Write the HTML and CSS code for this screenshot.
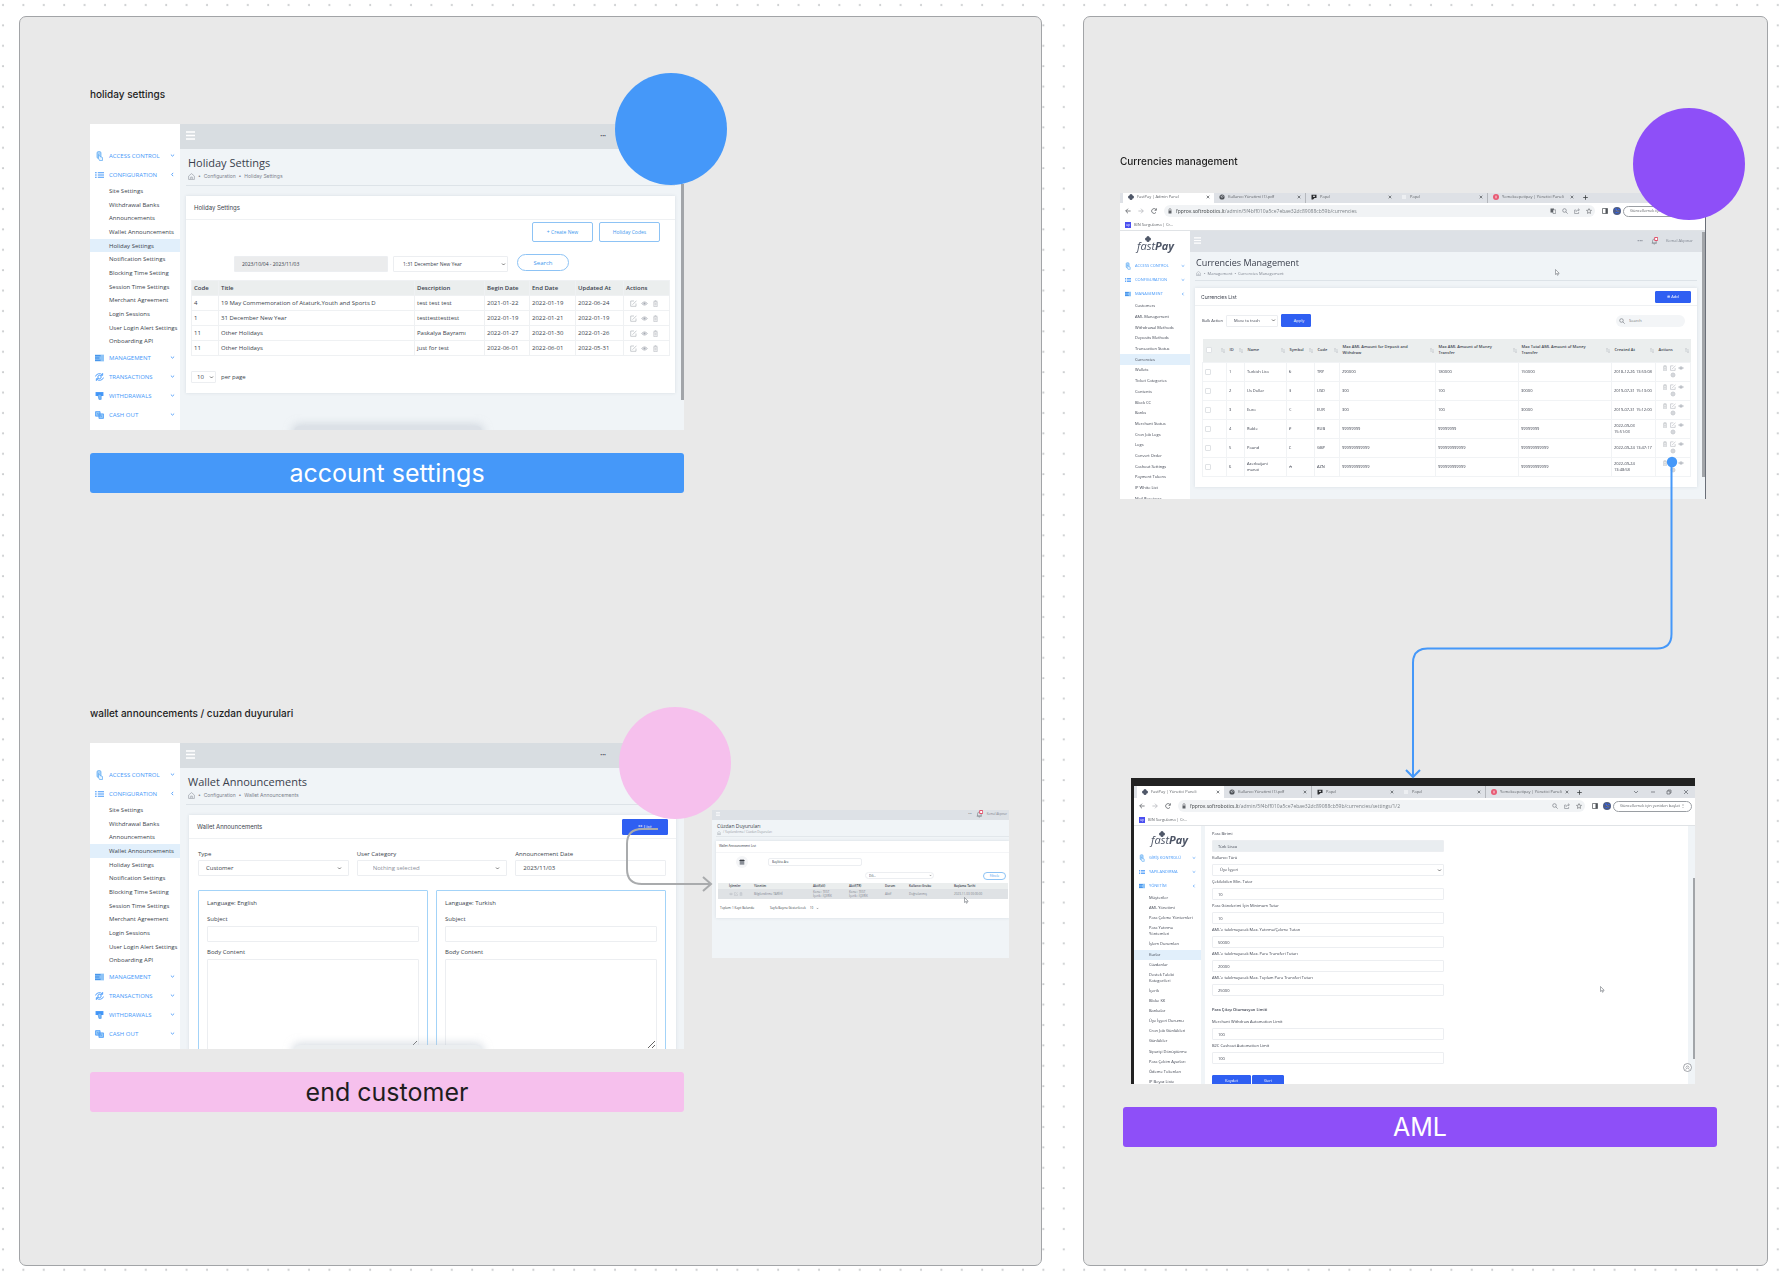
FILE: index.html
```html
<!DOCTYPE html>
<html lang="en">
<head>
    <meta charset="UTF-8">
    <meta name="viewport" content="width=device-width, initial-scale=1.0">
    <title>FastPay board</title>
    <link rel="stylesheet" href="styles.css">
</head>
<body>
    <!-- Icons -->
    <svg class="sprite" aria-hidden="true">
        <symbol id="i-menu" viewBox="0 0 9 9"><path d="M0 1h9M0 4.500h9M0 8h9" stroke="#fff" stroke-width="1.600"/></symbol>
        <symbol id="i-access" viewBox="0 0 8 10"><rect x="1.500" y=".500" width="4" height="7" rx="1.500" fill="#a9d3fa" stroke="#5ba9f2" stroke-width=".700"/><path d="M3 3.500v4l1 2h3v-3l-2.500-1z" fill="#e6f3ff" stroke="#5ba9f2" stroke-width=".700"/></symbol>
        <symbol id="i-list" viewBox="0 0 8 6"><path d="M0 1h1.500M2.500 1H8M0 3h1.500M2.500 3H8M0 5h1.500M2.500 5H8" stroke="#4598f9" stroke-width="1.100"/></symbol>
        <symbol id="i-manage" viewBox="0 0 8 6"><path d="M0 0h8v6H0z" fill="#8ec4f7"/><path d="M0 1h5M0 3h4M0 5h5" stroke="#3286e8"/></symbol>
        <symbol id="i-trans" viewBox="0 0 8 8"><circle cx="4" cy="4" r="1.500" fill="none" stroke="#4598f9" stroke-width=".800"/><path d="M.500 3.500a3.500 3 0 0 1 6-1.500M7.500 4.500a3.500 3 0 0 1-6 1.500M6.800.500v2H5M1.200 7.500v-2H3" fill="none" stroke="#4598f9" stroke-width=".800"/></symbol>
        <symbol id="i-withdraw" viewBox="0 0 8 7"><path d="M.500 0h7v3.500h-7z" fill="#4598f9"/><path d="M2.500 2h3v4.500h-2z" fill="#7cbaf8" stroke="#3286e8" stroke-width=".500"/></symbol>
        <symbol id="i-cash" viewBox="0 0 8 7"><path d="M.500.500h4v4h-4z M3.500 2.500h4v4h-4z" fill="#9accf8" stroke="#4598f9" stroke-width=".700"/><path d="M2 2.500h1M5 4.500h1" stroke="#3286e8" stroke-width=".800"/></symbol>
        <symbol id="i-down" viewBox="0 0 4 4"><path d="M.700 1.300 2 2.500l1.300-1.200" fill="none" stroke="currentColor" stroke-width=".700"/></symbol>
        <symbol id="i-left" viewBox="0 0 4 4"><path d="M2.500.700 1.300 2l1.200 1.300" fill="none" stroke="currentColor" stroke-width=".700"/></symbol>
        <symbol id="i-home" viewBox="0 0 6 6"><path d="M.500 2.700 3 .500l2.500 2.200V5.500h-5zM2.300 5.300V3.500h1.400v1.800" fill="none" stroke="#8b919b" stroke-width=".500"/></symbol>
        <symbol id="i-edit" viewBox="0 0 7 7"><path d="M4 1H.700v5.300H6V3.500M2.500 4.700 6.500.700" fill="none" stroke="#b3b7bd" stroke-width=".700"/></symbol>
        <symbol id="i-eye" viewBox="0 0 7 7"><path d="M.500 3.500q3-3.500 6 0q-3 3.500-6 0z" fill="#e0e2e6" stroke="#b3b7bd" stroke-width=".600"/><circle cx="3.500" cy="3.500" r="1" fill="#a5aab2"/></symbol>
        <symbol id="i-trash" viewBox="0 0 7 7"><path d="M1.800 2h3.400v4.600H1.800zM1.500 1.300h4M2.700.600h1.600M3 3v2.500M4 3v2.500" fill="none" stroke="#b3b7bd" stroke-width=".600"/></symbol>
        <symbol id="i-gear" viewBox="0 0 7 7"><circle cx="3.500" cy="3.500" r="2.300" fill="#e8eaed" stroke="#b3b7bd" stroke-width=".800"/><circle cx="3.500" cy="3.500" r=".800" fill="#b3b7bd"/></symbol>
        <symbol id="i-clover" viewBox="0 0 6 6"><circle cx="3" cy="1.500" r="1.500" fill="#4d5566"/><circle cx="1.500" cy="3" r="1.500" fill="#4d5566"/><circle cx="4.500" cy="3" r="1.500" fill="#4d5566"/><circle cx="3" cy="4.500" r="1.500" fill="#4d5566"/></symbol>
        <symbol id="i-globe" viewBox="0 0 6 6"><circle cx="3" cy="3" r="2.600" fill="#4f5358"/><path d="M1.500 2l1.500.500v1.500M3.500 1.200l1 1.300" stroke="#dee1e6" stroke-width=".700" fill="none"/></symbol>
        <symbol id="i-papel" viewBox="0 0 6 6"><path d="M.500.700h5V4H3.500L2 5.500H.500z" fill="#2b2d30"/><path d="M2 1.800h2v1H2z" fill="#fff"/></symbol>
        <symbol id="i-blank" viewBox="0 0 6 6"><path d="M1 1h4v4H1z" fill="#edeff2"/></symbol>
        <symbol id="i-red" viewBox="0 0 6 6"><circle cx="3" cy="3" r="3" fill="#e85a74"/><path d="M3 1.700v2.600" stroke="#fff" stroke-width=".800"/></symbol>
        <symbol id="i-close" viewBox="0 0 4 4"><path d="M.700.700l2.600 2.600M3.300.700.700 3.300" stroke="#4f5358" stroke-width=".700"/></symbol>
        <symbol id="i-plus" viewBox="0 0 5 5"><path d="M2.500.200v4.600M.200 2.500h4.600" stroke="#3c4043" stroke-width=".800"/></symbol>
        <symbol id="i-back" viewBox="0 0 6 6"><path d="M5.600 3H.800M3 .700.700 3 3 5.300" fill="none" stroke="currentColor" stroke-width=".800"/></symbol>
        <symbol id="i-forward" viewBox="0 0 6 6"><path d="M.400 3h4.800M3 .700 5.300 3 3 5.300" fill="none" stroke="currentColor" stroke-width=".800"/></symbol>
        <symbol id="i-reload" viewBox="0 0 6 6"><path d="M5 4.400A2.400 2.400 0 1 1 5 1.600M5.400.300v2H3.500" fill="none" stroke="#5f6368" stroke-width=".800"/></symbol>
        <symbol id="i-lock" viewBox="0 0 6 6"><path d="M1.500 2.500h3v3h-3z" fill="#5f6368"/><path d="M2 2.500V1.600a1 1 0 0 1 2 0v.900" fill="none" stroke="#5f6368" stroke-width=".600"/></symbol>
        <symbol id="i-translate" viewBox="0 0 6 6"><path d="M.500.500h3.500v4H.500z" fill="#5f6368"/><path d="M3 1.800h2.600v3.700H3z" fill="#f1f3f4" stroke="#5f6368" stroke-width=".500"/></symbol>
        <symbol id="i-search" viewBox="0 0 6 6"><circle cx="2.500" cy="2.500" r="1.800" fill="none" stroke="#7b8086" stroke-width=".700"/><path d="M3.800 3.800 5.700 5.700" stroke="#7b8086" stroke-width=".700"/></symbol>
        <symbol id="i-share" viewBox="0 0 6 6"><path d="M2 2H.600v3.500h4V4M2 4q0-2.200 3-2.200M4 .600l1.500 1.200L4 3" fill="none" stroke="#7b8086" stroke-width=".600"/></symbol>
        <symbol id="i-star" viewBox="0 0 6 6"><path d="M3 .600l.700 1.600 1.800.200-1.300 1.200.300 1.800L3 4.500l-1.500.900.300-1.800L.500 2.400l1.800-.200z" fill="none" stroke="#5f6368" stroke-width=".600"/></symbol>
        <symbol id="i-panel" viewBox="0 0 6 6"><path d="M.500.500h5v5h-5z" fill="#fff" stroke="#4f5358" stroke-width=".700"/><path d="M3.500.500h2v5h-2z" fill="#4f5358"/></symbol>
        <symbol id="i-avatar" viewBox="0 0 8 8"><circle cx="4" cy="4" r="4" fill="#4d5c85"/><path d="M2 2h1.500v1.500M5 2.500h1.500M2.500 5.500H4M5 5v1" stroke="#2f62f2" fill="none"/><path d="M4 3.500l1 1" stroke="#d8b08a" stroke-width=".700"/></symbol>
        <symbol id="i-bell" viewBox="0 0 7 8"><path d="M1.500 6V4q0-2 1.800-2T5.200 4v2zM.700 6.200h5.200M2.800 7.200h1" fill="none" stroke="#7b8086" stroke-width=".600"/><path d="M3.700.500h3v3h-3z" fill="#fff" stroke="#e0435f" stroke-width=".900"/></symbol>
        <symbol id="i-cursor" viewBox="0 0 5 7"><path d="M.500.500v5l1.200-1 .800 1.800.800-.400-.700-1.600h1.600z" fill="#fff" stroke="#555a63" stroke-width=".500"/></symbol>
        <symbol id="i-calendar" viewBox="0 0 6 6"><path d="M.700 1h4.600v4.700H.700z" fill="#8b9098"/><path d="M.500 1.500h5M2 .300v1M4 .300v1" stroke="#3c4148"/></symbol>
        <symbol id="i-sort" viewBox="0 0 4 5"><path d="M1 4V.500M.300 1.300 1 .500l.700.800M3 1v3.500M2.300 3.700l.700.800.700-.800" fill="none" stroke="currentColor" stroke-width=".350"/></symbol>
    </svg>

    <!-- Dot grid -->
    <svg class="dots" aria-hidden="true">
        <defs>
            <pattern id="dot" width="20.400" height="20.400" patternUnits="userSpaceOnUse">
                <circle cx="3" cy="5" r="1" fill="#c6c8ca"/>
            </pattern>
        </defs>
        <rect width="100%" height="100%" fill="url(#dot)"/>
    </svg>

    <main class="board">
        <section class="section">
            <!-- Holiday settings -->
            <div class="group group-holiday">
                <h2 class="note">holiday settings</h2>
                <div class="shot admin">
                    <nav class="sidebar">
                        <a class="cat" href="#"><svg><use href="#i-access"/></svg><span>ACCESS CONTROL</span><svg class="arrow"><use href="#i-down"/></svg></a>
                        <a class="cat" href="#"><svg><use href="#i-list"/></svg><span>CONFIGURATION</span><svg class="arrow"><use href="#i-left"/></svg></a>
                        <ul class="submenu">
                            <li><a href="#">Site Settings</a></li>
                            <li><a href="#">Withdrawal Banks</a></li>
                            <li><a href="#">Announcements</a></li>
                            <li><a href="#">Wallet Announcements</a></li>
                            <li class="active"><a href="#">Holiday Settings</a></li>
                            <li><a href="#">Notification Settings</a></li>
                            <li><a href="#">Blocking Time Setting</a></li>
                            <li><a href="#">Session Time Settings</a></li>
                            <li><a href="#">Merchant Agreement</a></li>
                            <li><a href="#">Login Sessions</a></li>
                            <li><a href="#">User Login Alert Settings</a></li>
                            <li><a href="#">Onboarding API</a></li>
                        </ul>
                        <a class="cat" href="#"><svg><use href="#i-manage"/></svg><span>MANAGEMENT</span><svg class="arrow"><use href="#i-down"/></svg></a>
                        <a class="cat" href="#"><svg><use href="#i-trans"/></svg><span>TRANSACTIONS</span><svg class="arrow"><use href="#i-down"/></svg></a>
                        <a class="cat" href="#"><svg><use href="#i-withdraw"/></svg><span>WITHDRAWALS</span><svg class="arrow"><use href="#i-down"/></svg></a>
                        <a class="cat" href="#"><svg><use href="#i-cash"/></svg><span>CASH OUT</span><svg class="arrow"><use href="#i-down"/></svg></a>
                        <a class="cat last" href="#" aria-label="More"><svg><use href="#i-manage"/></svg></a>
                    </nav>
                    <div class="content">
                        <div class="topbar"><svg class="burger"><use href="#i-menu"/></svg><span class="more">•••</span></div>
                        <div class="page-head">
                            <h3>Holiday Settings</h3>
                            <p><svg><use href="#i-home"/></svg> • &nbsp;Configuration&nbsp; • &nbsp;Holiday Settings</p>
                        </div>
                        <div class="card holiday-card">
                            <h4>Holiday Settings</h4>
                            <div class="card-actions">
                                <button class="btn-line">+ Create New</button>
                                <button class="btn-line">Holiday Codes</button>
                            </div>
                            <div class="filters">
                                <input class="range" type="text" value="2023/10/04 - 2023/11/03" aria-label="Date range" readonly>
                                <select class="day" aria-label="Holiday"><option>1:31 December New Year</option></select>
                                <button class="btn-line btn-pill">Search</button>
                            </div>
                            <table class="holidays">
                                <colgroup><col class="c27"><col class="c196"><col class="c70"><col class="c45"><col class="c46"><col class="c48"><col class="c46"></colgroup>
                                <thead>
                                    <tr><th>Code</th><th>Title</th><th>Description</th><th>Begin Date</th><th>End Date</th><th>Updated At</th><th>Actions</th></tr>
                                </thead>
                                <tbody>
                                    <tr><td>4</td><td>19 May Commemoration of Ataturk,Youth and Sports D</td><td>test test test</td><td>2021-01-22</td><td>2022-01-19</td><td>2022-06-24</td><td class="acts"><svg><use href="#i-edit"/></svg><svg><use href="#i-eye"/></svg><svg><use href="#i-trash"/></svg></td></tr>
                                    <tr><td>1</td><td>31 December New Year</td><td>testtesttesttest</td><td>2022-01-19</td><td>2022-01-21</td><td>2022-01-19</td><td class="acts"><svg><use href="#i-edit"/></svg><svg><use href="#i-eye"/></svg><svg><use href="#i-trash"/></svg></td></tr>
                                    <tr><td>11</td><td>Other Holidays</td><td>Paskalya Bayramı</td><td>2022-01-27</td><td>2022-01-30</td><td>2022-01-26</td><td class="acts"><svg><use href="#i-edit"/></svg><svg><use href="#i-eye"/></svg><svg><use href="#i-trash"/></svg></td></tr>
                                    <tr><td>11</td><td>Other Holidays</td><td>just for test</td><td>2022-06-01</td><td>2022-06-01</td><td>2022-05-31</td><td class="acts"><svg><use href="#i-edit"/></svg><svg><use href="#i-eye"/></svg><svg><use href="#i-trash"/></svg></td></tr>
                                </tbody>
                            </table>
                            <div class="per-page">
                                <select id="per-page"><option>10</option></select>
                                <label for="per-page">per page</label>
                            </div>
                        </div>
                    </div>
                    <div class="scroll"></div>
                    <div class="dock"></div>
                </div>
                <div class="bar blue">account settings</div>
            </div>
            <div class="circle circle-blue"></div>

            <!-- Wallet announcements -->
            <div class="group group-wallet">
                <h2 class="note">wallet announcements / cuzdan duyurulari</h2>
                <div class="shot admin">
                    <nav class="sidebar">
                        <a class="cat" href="#"><svg><use href="#i-access"/></svg><span>ACCESS CONTROL</span><svg class="arrow"><use href="#i-down"/></svg></a>
                        <a class="cat" href="#"><svg><use href="#i-list"/></svg><span>CONFIGURATION</span><svg class="arrow"><use href="#i-left"/></svg></a>
                        <ul class="submenu">
                            <li><a href="#">Site Settings</a></li>
                            <li><a href="#">Withdrawal Banks</a></li>
                            <li><a href="#">Announcements</a></li>
                            <li class="active"><a href="#">Wallet Announcements</a></li>
                            <li><a href="#">Holiday Settings</a></li>
                            <li><a href="#">Notification Settings</a></li>
                            <li><a href="#">Blocking Time Setting</a></li>
                            <li><a href="#">Session Time Settings</a></li>
                            <li><a href="#">Merchant Agreement</a></li>
                            <li><a href="#">Login Sessions</a></li>
                            <li><a href="#">User Login Alert Settings</a></li>
                            <li><a href="#">Onboarding API</a></li>
                        </ul>
                        <a class="cat" href="#"><svg><use href="#i-manage"/></svg><span>MANAGEMENT</span><svg class="arrow"><use href="#i-down"/></svg></a>
                        <a class="cat" href="#"><svg><use href="#i-trans"/></svg><span>TRANSACTIONS</span><svg class="arrow"><use href="#i-down"/></svg></a>
                        <a class="cat" href="#"><svg><use href="#i-withdraw"/></svg><span>WITHDRAWALS</span><svg class="arrow"><use href="#i-down"/></svg></a>
                        <a class="cat" href="#"><svg><use href="#i-cash"/></svg><span>CASH OUT</span><svg class="arrow"><use href="#i-down"/></svg></a>
                        <a class="cat last" href="#" aria-label="More"><svg><use href="#i-manage"/></svg></a>
                    </nav>
                    <div class="content">
                        <div class="topbar"><svg class="burger"><use href="#i-menu"/></svg><span class="more">•••</span></div>
                        <div class="page-head">
                            <h3>Wallet Announcements</h3>
                            <p><svg><use href="#i-home"/></svg> • &nbsp;Configuration&nbsp; • &nbsp;Wallet Announcements</p>
                        </div>
                        <div class="card wallet-card">
                            <div class="card-head">
                                <h4>Wallet Announcements</h4>
                                <button class="btn-solid">☷ List</button>
                            </div>
                            <div class="columns three">
                                <div><label for="type">Type</label><select id="type"><option>Customer</option></select></div>
                                <div><label for="user-cat">User Category</label><select id="user-cat" class="empty"><option>Nothing selected</option></select></div>
                                <div><label for="ann-date">Announcement Date</label><input id="ann-date" type="text" value="2023/11/03"></div>
                            </div>
                            <div class="columns two">
                                <fieldset class="lang">
                                    <h5>Language: English</h5>
                                    <label for="subj-en">Subject</label><input id="subj-en" type="text">
                                    <label for="body-en">Body Content</label><textarea id="body-en"></textarea>
                                </fieldset>
                                <fieldset class="lang">
                                    <h5>Language: Turkish</h5>
                                    <label for="subj-tr">Subject</label><input id="subj-tr" type="text">
                                    <label for="body-tr">Body Content</label><textarea id="body-tr"></textarea>
                                </fieldset>
                            </div>
                        </div>
                    </div>
                    <div class="dock light"></div>
                </div>
                <div class="bar pink">end customer</div>
            </div>
            <div class="circle circle-pink"></div>

            <!-- Announcement list -->
            <div class="shot mini">
                <div class="mini-top"><svg class="burger"><use href="#i-menu"/></svg><span class="more">•••</span><svg class="bell"><use href="#i-bell"/></svg><span>Kemal Akpınar</span></div>
                <div class="mini-head">
                    <h3>Cüzdan Duyuruları</h3>
                    <p><svg><use href="#i-home"/></svg> / Yapılandırma / Cüzdan Duyuruları</p>
                </div>
                <div class="card mini-card">
                    <h4>Wallet Announcement List</h4>
                    <div class="mini-row">
                        <span class="cal"><svg><use href="#i-calendar"/></svg></span>
                        <input type="text" value="Başlıkta Ara" aria-label="Title">
                    </div>
                    <div class="mini-row end">
                        <select aria-label="Language"><option>Dili...</option></select>
                        <button class="btn-line btn-pill">Filtrele</button>
                    </div>
                    <table>
                        <thead><tr><th class="first">İşlemler</th><th class="w59">Yönetim</th><th class="w36">Aktif(dil)</th><th class="w36">Aktif(TR)</th><th class="w24">Durum</th><th class="w45">Kullanıcı Grubu</th><th>Başlama Tarihi</th></tr></thead>
                        <tbody><tr><td class="first"><svg><use href="#i-eye"/></svg><svg><use href="#i-edit"/></svg><svg><use href="#i-trash"/></svg></td><td>Bilgilendirme TARİHİ</td><td>Konu : TEST<br>İçerik : İÇERİK</td><td>Konu : TEST<br>İçerik : İÇERİK</td><td>Aktif</td><td>Doğrulanmış</td><td>2023-11-03 00:00:00</td></tr></tbody>
                    </table>
                    <div class="mini-foot"><span>Toplam: 1 Kayıt Bulundu</span><label for="mini-size">Sayfa Başına Gösterilecek</label><select id="mini-size"><option>10</option></select></div>
                </div>
                <svg class="cursor"><use href="#i-cursor"/></svg>
            </div>

            <svg class="connector" aria-hidden="true">
                <path d="M638 812H622Q607 812 607 827V852Q607 867 622 867H690M683 860l8 7-8 7" fill="none" stroke="#a9abad" stroke-width="2"/>
            </svg>
        </section>

        <section class="section">
            <!-- Currencies -->
            <div class="group group-currencies">
                <h2 class="note">Currencies management</h2>
                <div class="shot browser">
                    <div class="tabs">
                        <div class="tab on"><svg><use href="#i-clover"/></svg><span>FastPay | Admin Panel</span><svg class="x"><use href="#i-close"/></svg></div>
                        <div class="tab"><svg><use href="#i-globe"/></svg><span>Kullanıcı Yönetimi (1).pdf</span><svg class="x"><use href="#i-close"/></svg></div>
                        <div class="tab sep"><svg><use href="#i-papel"/></svg><span>Papel</span><svg class="x"><use href="#i-close"/></svg></div>
                        <div class="tab"><svg><use href="#i-blank"/></svg><span>Papel</span><svg class="x"><use href="#i-close"/></svg></div>
                        <div class="tab sep"><svg><use href="#i-red"/></svg><span>Yemeksepetipay | Yönetici Paneli</span><svg class="x"><use href="#i-close"/></svg></div>
                        <div class="tab-new"><svg><use href="#i-plus"/></svg></div>
                    </div>
                    <div class="toolbar">
                        <svg><use href="#i-back"/></svg><svg class="dim"><use href="#i-forward"/></svg><svg><use href="#i-reload"/></svg>
                        <div class="url"><svg><use href="#i-lock"/></svg><span><b>fpprov.softrobotics.lt</b>/admin/5f4bff010a5ce7ebae32dc89088cb59b/currencies</span><svg><use href="#i-translate"/></svg><svg><use href="#i-search"/></svg><svg><use href="#i-share"/></svg><svg><use href="#i-star"/></svg></div>
                        <svg><use href="#i-panel"/></svg><svg class="avatar"><use href="#i-avatar"/></svg>
                        <button class="update">Güncellemek için yeniden başlat ⋮</button>
                    </div>
                    <div class="bookmarks"><span class="fav">up</span>BIN Sorgulama | Cr...</div>
                    <div class="site">
                        <nav class="sidebar">
                            <div class="logo"><svg><use href="#i-clover"/></svg>fast<b>Pay</b></div>
                            <a class="cat" href="#"><svg><use href="#i-access"/></svg><span>ACCESS CONTROL</span><svg class="arrow"><use href="#i-down"/></svg></a>
                            <a class="cat" href="#"><svg><use href="#i-list"/></svg><span>CONFIGURATION</span><svg class="arrow"><use href="#i-down"/></svg></a>
                            <a class="cat" href="#"><svg><use href="#i-manage"/></svg><span>MANAGEMENT</span><svg class="arrow"><use href="#i-left"/></svg></a>
                            <ul class="submenu">
                                <li><a href="#">Customers</a></li>
                                <li><a href="#">AML Management</a></li>
                                <li><a href="#">Withdrawal Methods</a></li>
                                <li><a href="#">Deposits Methods</a></li>
                                <li><a href="#">Transaction Status</a></li>
                                <li class="active"><a href="#">Currencies</a></li>
                                <li><a href="#">Wallets</a></li>
                                <li><a href="#">Ticket Categories</a></li>
                                <li><a href="#">Contents</a></li>
                                <li><a href="#">Block CC</a></li>
                                <li><a href="#">Banks</a></li>
                                <li><a href="#">Merchant Status</a></li>
                                <li><a href="#">Cron Job Logs</a></li>
                                <li><a href="#">Logs</a></li>
                                <li><a href="#">Convert Order</a></li>
                                <li><a href="#">Cashout Settings</a></li>
                                <li><a href="#">Payment Tokens</a></li>
                                <li><a href="#">IP White List</a></li>
                                <li><a href="#">Mail Receivers</a></li>
                            </ul>
                        </nav>
                        <div class="content">
                            <div class="topbar"><svg class="burger"><use href="#i-menu"/></svg><span class="more">•••</span><svg class="bell"><use href="#i-bell"/></svg><span>Kemal Akpınar</span></div>
                            <div class="page-head">
                                <h3>Currencies Management</h3>
                                <p><svg><use href="#i-home"/></svg> • &nbsp;Management&nbsp; • &nbsp;Currencies Management</p>
                            </div>
                            <div class="card currency-card">
                                <div class="card-head"><h4>Currencies List</h4><button class="btn-solid">⊕ Add</button></div>
                                <div class="bulk">
                                    <label for="bulk">Bulk Action</label>
                                    <select id="bulk"><option>Move to trash</option></select>
                                    <button class="btn-solid">Apply</button>
                                    <div class="find"><svg><use href="#i-search"/></svg><input type="text" placeholder="Search" aria-label="Search"></div>
                                </div>
                                <table>
                                    <colgroup><col class="c24"><col class="c18"><col class="c42"><col class="c28"><col class="c25"><col class="c96"><col class="c83"><col class="c93"><col class="c44"><col class="c35"></colgroup>
                                    <thead>
                                        <tr>
                                            <th><input type="checkbox" aria-label="Select all"><svg><use href="#i-sort"/></svg></th>
                                            <th>ID<svg><use href="#i-sort"/></svg></th>
                                            <th>Name<svg><use href="#i-sort"/></svg></th>
                                            <th>Symbol<svg><use href="#i-sort"/></svg></th>
                                            <th>Code<svg><use href="#i-sort"/></svg></th>
                                            <th>Max AML Amount for Deposit and<br>Withdraw<svg><use href="#i-sort"/></svg></th>
                                            <th>Max AML Amount of Money<br>Transfer<svg><use href="#i-sort"/></svg></th>
                                            <th>Max Total AML Amount of Money<br>Transfer<svg><use href="#i-sort"/></svg></th>
                                            <th>Created At<svg><use href="#i-sort"/></svg></th>
                                            <th>Actions<svg><use href="#i-sort"/></svg></th>
                                        </tr>
                                    </thead>
                                    <tbody>
                                        <tr><td><input type="checkbox" aria-label="Select 1"></td><td>1</td><td>Turkish Lira</td><td>₺</td><td>TRY</td><td>290000</td><td>180000</td><td>150000</td><td>2018-12-26 13:53:08</td><td class="acts"><svg><use href="#i-trash"/></svg><svg><use href="#i-edit"/></svg><svg><use href="#i-eye"/></svg><svg><use href="#i-gear"/></svg></td></tr>
                                        <tr><td><input type="checkbox" aria-label="Select 2"></td><td>2</td><td>Us Dollar</td><td>$</td><td>USD</td><td>300</td><td>100</td><td>30000</td><td>2019-07-31 15:13:00</td><td class="acts"><svg><use href="#i-trash"/></svg><svg><use href="#i-edit"/></svg><svg><use href="#i-eye"/></svg><svg><use href="#i-gear"/></svg></td></tr>
                                        <tr><td><input type="checkbox" aria-label="Select 3"></td><td>3</td><td>Euro</td><td>€</td><td>EUR</td><td>300</td><td>100</td><td>30000</td><td>2019-07-31 15:12:00</td><td class="acts"><svg><use href="#i-trash"/></svg><svg><use href="#i-edit"/></svg><svg><use href="#i-eye"/></svg><svg><use href="#i-gear"/></svg></td></tr>
                                        <tr><td><input type="checkbox" aria-label="Select 4"></td><td>4</td><td>Ruble</td><td>₽</td><td>RUB</td><td>99999999</td><td>99999999</td><td>99999999</td><td>2022-09-03<br>15:51:03</td><td class="acts"><svg><use href="#i-trash"/></svg><svg><use href="#i-edit"/></svg><svg><use href="#i-eye"/></svg><svg><use href="#i-gear"/></svg></td></tr>
                                        <tr><td><input type="checkbox" aria-label="Select 5"></td><td>5</td><td>Pound</td><td>£</td><td>GBP</td><td>999999999999</td><td>999999999999</td><td>999999999999</td><td>2022-09-24 13:47:17</td><td class="acts"><svg><use href="#i-trash"/></svg><svg><use href="#i-edit"/></svg><svg><use href="#i-eye"/></svg><svg><use href="#i-gear"/></svg></td></tr>
                                        <tr><td><input type="checkbox" aria-label="Select 6"></td><td>6</td><td>Azerbaijani<br>manat</td><td>₼</td><td>AZN</td><td>999999999999</td><td>999999999999</td><td>999999999999</td><td>2022-09-24<br>13:48:58</td><td class="acts"><svg><use href="#i-trash"/></svg><svg><use href="#i-edit"/></svg><svg><use href="#i-eye"/></svg><svg><use href="#i-gear"/></svg></td></tr>
                                    </tbody>
                                </table>
                            </div>
                        </div>
                        <div class="scroll"></div>
                    </div>
                    <svg class="cursor"><use href="#i-cursor"/></svg>
                </div>
            </div>
            <div class="circle circle-purple"></div>

            <!-- Currency form -->
            <div class="group group-form">
                <div class="shot browser dark">
                    <div class="tabs">
                        <div class="tab on"><svg><use href="#i-clover"/></svg><span>FastPay | Yönetici Paneli</span><svg class="x"><use href="#i-close"/></svg></div>
                        <div class="tab"><svg><use href="#i-globe"/></svg><span>Kullanıcı Yönetimi (1).pdf</span><svg class="x"><use href="#i-close"/></svg></div>
                        <div class="tab sep"><svg><use href="#i-papel"/></svg><span>Papel</span><svg class="x"><use href="#i-close"/></svg></div>
                        <div class="tab"><svg><use href="#i-blank"/></svg><span>Papel</span><svg class="x"><use href="#i-close"/></svg></div>
                        <div class="tab sep"><svg><use href="#i-red"/></svg><span>Yemeksepetipay | Yönetici Paneli</span><svg class="x"><use href="#i-close"/></svg></div>
                        <div class="tab-new"><svg><use href="#i-plus"/></svg></div>
                        <svg class="win-buttons" viewBox="0 0 56 6"><path d="M1 2l2 2 2-2M18 3h4M34 2h3v3h-3zM35 2V1h3v3h-1M51 1l4 4M55 1l-4 4" fill="none" stroke="#5f6368" stroke-width=".700"/></svg>
                    </div>
                    <div class="toolbar">
                        <svg><use href="#i-back"/></svg><svg class="dim"><use href="#i-forward"/></svg><svg><use href="#i-reload"/></svg>
                        <div class="url"><svg><use href="#i-lock"/></svg><span><b>fpprov.softrobotics.lt</b>/admin/5f4bff010a5ce7ebae32dc89088cb59b/currencies/settings/1/2</span><svg><use href="#i-search"/></svg><svg><use href="#i-share"/></svg><svg><use href="#i-star"/></svg></div>
                        <svg><use href="#i-panel"/></svg><svg class="avatar"><use href="#i-avatar"/></svg>
                        <button class="update">Güncellemek için yeniden başlat ⋮</button>
                    </div>
                    <div class="bookmarks"><span class="fav">up</span>BIN Sorgulama | Cr...</div>
                    <div class="site">
                        <nav class="sidebar">
                            <div class="logo"><svg><use href="#i-clover"/></svg>fast<b>Pay</b></div>
                            <a class="cat" href="#"><svg><use href="#i-access"/></svg><span>GİRİŞ KONTROLÜ</span><svg class="arrow"><use href="#i-down"/></svg></a>
                            <a class="cat" href="#"><svg><use href="#i-list"/></svg><span>YAPILANDIRMA</span><svg class="arrow"><use href="#i-down"/></svg></a>
                            <a class="cat" href="#"><svg><use href="#i-manage"/></svg><span>YÖNETİM</span><svg class="arrow"><use href="#i-left"/></svg></a>
                            <ul class="submenu">
                                <li><a href="#">Müşteriler</a></li>
                                <li><a href="#">AML Yönetimi</a></li>
                                <li><a href="#">Para Çekme Yöntemleri</a></li>
                                <li><a href="#">Para Yatırma<br>Yöntemleri</a></li>
                                <li><a href="#">İşlem Durumları</a></li>
                                <li class="active"><a href="#">Kurlar</a></li>
                                <li><a href="#">Cüzdanlar</a></li>
                                <li><a href="#">Destek Talebi<br>Kategorileri</a></li>
                                <li><a href="#">İçerik</a></li>
                                <li><a href="#">Bloke KK</a></li>
                                <li><a href="#">Bankalar</a></li>
                                <li><a href="#">Üye İşyeri Durumu</a></li>
                                <li><a href="#">Cron Job Günlükleri</a></li>
                                <li><a href="#">Günlükler</a></li>
                                <li><a href="#">Siparişi Dönüştürme</a></li>
                                <li><a href="#">Para Çekim Ayarları</a></li>
                                <li><a href="#">Ödeme Tokenları</a></li>
                                <li><a href="#">IP Beyaz Liste</a></li>
                            </ul>
                        </nav>
                        <form class="limits">
                            <label for="f1">Para Birimi</label><input id="f1" type="text" value="Türk Lirası" disabled>
                            <label for="f2">Kullanıcı Türü</label><select id="f2"><option>Üye İşyeri</option></select>
                            <label for="f3">Çekilebilen Min. Tutar</label><input id="f3" type="text" value="10">
                            <label for="f4">Para Gönderimi İçin Minimum Tutar</label><input id="f4" type="text" value="10">
                            <label for="f5">AML'e takılmayacak Max. Yatırma/Çekme Tutarı</label><input id="f5" type="text" value="50000">
                            <label for="f6">AML'e takılmayacak Max. Para Transferi Tutarı</label><input id="f6" type="text" value="20000">
                            <label for="f7">AML'e takılmayacak Max. Toplam Para Transferi Tutarı</label><input id="f7" type="text" value="25000">
                            <h5>Para Çıkışı Otomasyon Limiti</h5>
                            <label for="f8">Merchant Withdraw Automation Limit</label><input id="f8" type="text" value="100">
                            <label for="f9">B2C Cashout Automation Limit</label><input id="f9" type="text" value="100">
                            <div class="form-buttons"><button type="button" class="btn-solid">Kaydet</button><button type="button" class="btn-solid">Geri</button></div>
                        </form>
                        <div class="scroll"></div>
                        <button class="to-top" aria-label="Back to top"><svg viewBox="0 0 9 9"><circle cx="4.500" cy="4.500" r="4" fill="#fff" stroke="#7b8086" stroke-width=".700"/><path d="M2.700 4.500 4.500 2.700l1.800 1.800M2.700 6.500l1.800-1.800 1.800 1.800" fill="none" stroke="#7b8086" stroke-width=".700"/></svg></button>
                    </div>
                    <svg class="cursor"><use href="#i-cursor"/></svg>
                </div>
                <div class="bar purple">AML</div>
            </div>

            <svg class="connector" aria-hidden="true">
                <path d="M587.500 445V617Q587.500 631.500 573 631.500H343.500Q329 631.500 329 646V759M322 753l7 7 7-7" fill="none" stroke="#4598f9" stroke-width="2"/>
                <circle cx="588" cy="445" r="5.200" fill="#4598f9"/>
            </svg>
        </section>
    </main>
</body>
</html>
```
FILE: styles.css
```css
* {
    box-sizing: border-box;
}

body {
    margin: 0;
    background: #fff;
    font-family: Inter, sans-serif;
    color: #1e1e1e;
}

h2, h3, h4, h5, p, ul {
    margin: 0;
    padding: 0;
    font-weight: 400;
    list-style: none;
}

a {
    color: inherit;
    text-decoration: none;
}

svg {
    display: block;
    flex: none;
}

.sprite {
    position: absolute;
    width: 0;
    height: 0;
}

.dots {
    position: fixed;
    inset: 0;
    width: 100%;
    height: 100%;
}

/* Board */
.board {
    position: relative;
    display: grid;
    grid-template-columns: 1023fr 685fr;
    gap: 41px;
    min-height: 100vh;
    padding: 16px 20px 16px 19px;
}

.section {
    position: relative;
    background: #e9e9e9;
    border: 1px solid #a2a4a7;
    border-radius: 7px;
}

.group {
    position: absolute;
    display: flex;
    flex-direction: column;
    gap: 22px;
    width: 594px;
}

.group-holiday {
    left: 70px;
    top: 69px;
}

.group-wallet {
    left: 70px;
    top: 688px;
}

.group-currencies {
    left: 36px;
    top: 136px;
    gap: 24px;
}

.group-form {
    left: 39px;
    top: 761px;
}

.note {
    font-size: 10px;
    font-weight: 500;
    line-height: 16px;
}

.bar {
    height: 40px;
    margin-top: 1px;
    border-radius: 3px;
    font-size: 25px;
    line-height: 40px;
    text-align: center;
}

.blue {
    background: #4598f9;
    color: #fff;
}

.pink {
    background: #f6c0ed;
}

.purple {
    background: #8e4ff8;
    color: #fff;
}

.circle {
    position: absolute;
    width: 112px;
    height: 112px;
    border-radius: 50%;
}

.circle-blue {
    left: 595px;
    top: 56px;
    background: #4598f9;
}

.circle-pink {
    left: 599px;
    top: 690px;
    background: #f6c0ed;
}

.circle-purple {
    left: 549px;
    top: 91px;
    background: #8e4ff8;
}

.connector {
    position: absolute;
    inset: 0;
    width: 100%;
    height: 100%;
    pointer-events: none;
}

/* Screens */
.shot {
    position: relative;
    height: 306px;
    overflow: hidden;
    background: #f0f4f7;
    font-family: "Open Sans", sans-serif;
    font-size: 6px;
    line-height: 8px;
    color: #3a3f4c;
}

.shot input,
.shot select,
.shot textarea,
.shot button {
    margin: 0;
    padding: 0 7px;
    border: 1px solid #eceef1;
    border-radius: 1px;
    background-color: #fff;
    font: inherit;
    color: inherit;
    appearance: none;
}

.shot select {
    background-image: url("data:image/svg+xml,%3Csvg xmlns='http://www.w3.org/2000/svg' viewBox='0 0 5 5'%3E%3Cpath d='M1 1.500 2.500 3 4 1.500' fill='none' stroke='%23444' stroke-width='.7'/%3E%3C/svg%3E");
    background-repeat: no-repeat;
    background-size: 5px 5px;
    background-position: right 1px center;
}

.admin {
    display: flex;
}

.sidebar {
    flex: none;
    background: #fff;
}

.admin .sidebar {
    width: 90px;
    padding-top: 22px;
}

.cat {
    display: flex;
    align-items: center;
    height: 19px;
    padding: 0 5px;
    gap: 5px;
    color: #4598f9;
}

.cat svg {
    width: 9px;
    height: 10px;
}

.cat .arrow {
    width: 5px;
    height: 5px;
    margin-left: auto;
}

.submenu {
    display: flex;
    flex-direction: column;
}

.admin .submenu {
    height: 164px;
}

.submenu li {
    display: flex;
    flex: auto;
    align-items: center;
    padding-left: 19px;
}

.submenu .active {
    background: #e1effb;
}

.content {
    display: flex;
    flex: 1;
    flex-direction: column;
    min-width: 0;
}

.topbar {
    display: flex;
    align-items: center;
    flex: none;
    height: 25px;
    padding: 0 78px 2px 6px;
    background: #d8dde1;
}

.burger {
    width: 9px;
    height: 9px;
}

.more {
    margin-left: auto;
    font-size: 5px;
}

.page-head {
    margin: 0 9px 0 6px;
    padding: 5px 2px 3px;
    border-bottom: 1px solid #dde3e8;
}

.page-head h3 {
    font-size: 11px;
    line-height: 17px;
}

.page-head p {
    display: flex;
    align-items: center;
    gap: 3px;
    font-family: Inter, sans-serif;
    font-size: 5px;
    line-height: 11px;
    color: #7d838e;
}

.page-head p svg {
    width: 7px;
    height: 7px;
}

.card {
    background: #fff;
    box-shadow: 0 0 3px rgba(80, 100, 120, 0.15);
}

.card h4 {
    padding-left: 8px;
    font-family: Inter, sans-serif;
    font-size: 6px;
    line-height: 23px;
}

.holiday-card {
    height: 197px;
    margin: 10px 9px 0 6px;
}

.holiday-card h4 {
    border-bottom: 1px solid #eff1f3;
}

.card-actions {
    display: flex;
    justify-content: flex-end;
    gap: 6px;
    padding: 2px 15px 0;
}

.shot .btn-line {
    width: 61px;
    height: 20px;
    border-color: #8dc3f5;
    border-radius: 2px;
    padding: 0;
    font-size: 5px;
    color: #3d97ee;
}

.shot .btn-pill {
    width: 52px;
    height: 17px;
    border-radius: 9px;
    font-size: 6px;
}

.filters {
    display: flex;
    align-items: flex-start;
    gap: 5px;
    padding: 12px 0 8px 48px;
}

.shot .range,
.shot .day {
    width: 154px;
    height: 16px;
    margin-top: 2px;
    font-size: 5px;
}

.shot .range {
    background: #ebeced;
}

.shot .day {
    width: 115px;
    padding-left: 9px;
}

.shot .filters .btn-pill {
    margin-left: 4px;
}

.shot table {
    border-collapse: collapse;
    table-layout: fixed;
}

.shot th,
.shot td {
    padding: 0 2px;
    text-align: left;
    white-space: nowrap;
}

.shot th {
    background: #ebeeee;
    font-weight: 600;
}

.holidays {
    width: 478px;
    margin-left: 5px;
}

.holidays tr {
    height: 15px;
}

.holidays td,
.holidays th {
    border: 1px solid #eff1f3;
}

.c18 { width: 18px; }
.c24 { width: 24px; }
.c25 { width: 25px; }
.c27 { width: 27px; }
.c28 { width: 28px; }
.c35 { width: 35px; }
.c42 { width: 42px; }
.c44 { width: 44px; }
.c45 { width: 45px; }
.c46 { width: 46px; }
.c48 { width: 48px; }
.c70 { width: 70px; }
.c83 { width: 83px; }
.c93 { width: 93px; }
.c96 { width: 96px; }
.c196 { width: 196px; }

.acts svg {
    display: inline-block;
    width: 7px;
    height: 7px;
    margin-left: 4px;
    vertical-align: middle;
}

.per-page {
    display: flex;
    align-items: center;
    gap: 5px;
    padding: 15px 5px;
}

.per-page select {
    width: 25px;
    height: 12px;
    padding: 0 5px;
}

.scroll {
    position: absolute;
    right: 0;
    top: 60px;
    width: 3px;
    height: 216px;
    background: #a2a5a9;
}

.dock {
    position: absolute;
    left: 204px;
    bottom: -8px;
    width: 188px;
    height: 12px;
    border-radius: 12px;
    background: #dce1e7;
    box-shadow: 0 0 8px 2px rgba(190, 198, 208, 0.6);
}

.dock.light {
    background: #ebeef0;
}

/* Wallet form */
.wallet-card {
    flex: 1;
    margin: 10px 8px 0 9px;
}

.card-head {
    display: flex;
    align-items: center;
    justify-content: space-between;
    height: 24px;
    padding-right: 8px;
    border-bottom: 1px solid #eff1f3;
}

.card-head h4 {
    line-height: 16px;
}

.shot .btn-solid {
    border-color: #2f5ff2;
    background: #2f5ff2;
    color: #fff;
    padding: 0;
    border-radius: 1px;
}

.wallet-card .btn-solid {
    width: 46px;
    height: 16px;
    font-size: 5px;
}

.columns {
    display: grid;
    gap: 8px;
    padding: 0 10px 0 9px;
}

.three {
    grid-template-columns: repeat(3, 1fr);
    padding-top: 10px;
}

.two {
    grid-template-columns: repeat(2, 1fr);
    padding-top: 14px;
}

.columns label {
    display: block;
    line-height: 11px;
}

.columns input,
.columns select,
.columns textarea {
    display: block;
    width: 100%;
    height: 16px;
}

.columns select {
    background-position: right 6px center;
}

.shot .empty {
    padding-left: 15px;
    color: #8b919b;
}

.lang {
    min-width: 0;
    margin: 0;
    padding: 7px 8px 20px;
    border: 1px solid #a3d3f8;
    border-radius: 1px;
}

.lang h5 {
    font-size: 6px;
    line-height: 11px;
    font-weight: 500;
    margin-bottom: 5px;
}

.shot .lang input {
    margin: 1px 0 5px;
}

.shot .lang textarea {
    height: 91px;
    margin-top: 1px;
}

/* Announcement list */
.mini {
    position: absolute;
    left: 692px;
    top: 793px;
    width: 297px;
    height: 148px;
    font-size: 3px;
    line-height: 4px;
}

.mini-top {
    display: flex;
    align-items: center;
    gap: 4px;
    height: 10px;
    padding: 0 2px 2px 4px;
    background: #dde1e6;
    color: #7d838e;
}

.mini .burger {
    width: 4px;
    height: 4px;
}

.bell {
    width: 7px;
    height: 8px;
}

.mini .more {
    font-size: 3px;
}

.mini-head {
    margin-left: 4px;
    padding: 3px 0 1px 1px;
    border-bottom: 1px solid #e2e7eb;
}

.mini-head h3 {
    font-size: 5px;
    line-height: 7px;
}

.mini-head p {
    display: flex;
    align-items: center;
    gap: 2px;
    line-height: 5px;
    color: #9a9fa8;
}

.mini-head svg {
    width: 4px;
    height: 4px;
}

.mini-card {
    height: 77px;
    margin: 4px 0 0 4px;
}

.mini-card h4 {
    padding-left: 3px;
    font-size: 3px;
    line-height: 11px;
    border-bottom: 1px solid #f4f5f7;
}

.mini-row {
    display: flex;
    align-items: center;
    height: 18px;
    padding-left: 20px;
}

.mini-row.end {
    justify-content: flex-end;
    height: 12px;
    padding: 0 3px 3px 0;
}

.cal {
    display: grid;
    place-items: center;
    width: 12px;
    height: 12px;
    margin-right: 20px;
    border-radius: 50%;
    background: #f4f5f7;
}

.cal svg {
    width: 6px;
    height: 6px;
}

.mini .mini-row input {
    width: 94px;
    height: 8px;
    padding: 0 3px;
    border-radius: 2px;
}

.mini .mini-row select {
    width: 69px;
    height: 7px;
    margin-right: 49px;
    padding: 0 3px;
    border-radius: 4px;
    background-size: 3px 3px;
}

.mini .btn-pill {
    width: 23px;
    height: 8px;
    font-size: 3px;
}

.mini table {
    width: 290px;
    margin-left: 2px;
}

.mini thead tr {
    height: 6px;
}

.mini tbody tr {
    height: 10px;
    background: #dfe2e5;
}

.mini th,
.mini td {
    padding: 0;
}

.mini td {
    color: #7d838e;
}

.mini .first {
    width: 36px;
    padding-left: 11px;
}

.mini td svg {
    display: inline-block;
    width: 4px;
    height: 4px;
    margin-right: 1px;
}

.w24 { width: 24px; }
.w36 { width: 36px; }
.w45 { width: 45px; }
.w59 { width: 59px; }

.mini-foot {
    display: flex;
    align-items: center;
    gap: 2px;
    padding: 6px 4px;
}

.mini-foot label {
    margin-left: 14px;
}

.mini .mini-foot select {
    width: 12px;
    height: 6px;
    padding: 0 2px;
    border: 0;
    background-size: 3px 3px;
}

.cursor {
    position: absolute;
    width: 5px;
    height: 7px;
}

.mini .cursor {
    left: 252px;
    top: 87px;
}

/* Browser windows */
.browser {
    display: flex;
    flex-direction: column;
    width: 586px;
    background: #fff;
    border-right: 1px solid #6a6f78;
    font-size: 4px;
    line-height: 6px;
}

.browser.dark {
    width: 564px;
    margin-left: 8px;
    border: solid #222;
    border-width: 8px 0 0 3px;
}

.tabs {
    display: flex;
    flex: none;
    height: 10px;
    padding-left: 3px;
    background: #dee1e6;
    color: #5f6368;
}

.dark .tabs {
    height: 12px;
}

.tab {
    display: flex;
    align-items: center;
    gap: 3px;
    width: 91px;
    padding: 0 4px 2px 5px;
    white-space: nowrap;
}

.dark .tab {
    width: 87px;
    padding-bottom: 0;
}

.tab svg {
    width: 6px;
    height: 6px;
}

.tab .x {
    width: 4px;
    height: 4px;
    margin-left: auto;
}

.tab.on {
    background: #fff;
}

.tab.sep {
    border-left: 1px solid #b5b8bd;
}

.tab-new {
    padding: 2px 5px;
}

.tab-new svg {
    width: 5px;
    height: 5px;
}

.dark .tab-new {
    padding: 4px 5px;
}

.win-buttons {
    width: 56px;
    height: 6px;
    margin: 3px 6px 0 auto;
}

.toolbar {
    display: flex;
    align-items: center;
    flex: none;
    gap: 7px;
    height: 16px;
    padding: 0 3px 0 5px;
    color: #5f6368;
}

.toolbar svg {
    width: 6px;
    height: 6px;
}

.toolbar .dim {
    color: #b5b8bd;
}

.toolbar .avatar {
    width: 8px;
    height: 8px;
    margin-left: -2px;
}

.url {
    display: flex;
    flex: 1;
    align-items: center;
    gap: 6px;
    height: 12px;
    padding: 0 3px;
    border-radius: 6px;
    background: #f1f3f5;
    font-size: 5px;
}

.url span {
    margin: 0 auto 0 -3px;
    color: #7b8086;
}

.url b {
    font-weight: 400;
    color: #3c4043;
}

.shot .update {
    width: 79px;
    height: 11px;
    margin-left: -5px;
    padding: 0;
    border-color: #9a9ea3;
    border-radius: 6px;
    white-space: nowrap;
}

.bookmarks {
    display: flex;
    align-items: center;
    flex: none;
    gap: 3px;
    height: 12px;
    padding-left: 5px;
    border-bottom: 1px solid #e0e3e6;
    color: #5f6368;
}

.fav {
    width: 6px;
    height: 6px;
    background: #4a4ff0;
    font-size: 3px;
    line-height: 6px;
    text-align: center;
    color: #fff;
}

.site {
    position: relative;
    display: flex;
    flex: 1;
    min-height: 0;
    background: #f0f4f7;
}

.browser .sidebar {
    width: 70px;
}

.dark .sidebar {
    width: 67px;
}

.logo {
    position: relative;
    height: 28px;
    padding: 8px 0 0 17px;
    font-size: 11px;
    line-height: 13px;
    font-style: italic;
    color: #4d5566;
}

.dark .logo {
    height: 25px;
    padding-top: 7px;
}

.logo svg {
    position: absolute;
    left: 25px;
    top: 5px;
    width: 6px;
    height: 6px;
}

.browser .cat {
    height: 14px;
    gap: 4px;
}

.browser .cat svg {
    width: 6px;
    height: 8px;
}

.browser .cat .arrow {
    width: 4px;
    height: 4px;
}

.browser .submenu {
    height: 203px;
}

.dark .submenu {
    height: 194px;
}

.browser .submenu li {
    padding-left: 15px;
    white-space: nowrap;
}

.browser .topbar {
    height: 21px;
    gap: 8px;
    padding: 0 12px 2px 4px;
    background: #dde1e6;
    color: #7d838e;
}

.browser .burger {
    width: 7px;
    height: 7px;
}

.browser .page-head {
    margin: 0 8px 0 5px;
    padding: 4px 1px 2px;
}

.browser .page-head h3 {
    font-size: 9px;
    line-height: 13px;
}

.browser .page-head p {
    font-family: "Open Sans", sans-serif;
    font-size: 4px;
    line-height: 9px;
}

.browser .page-head svg {
    width: 5px;
    height: 5px;
}

.currency-card {
    height: 199px;
    margin: 7px 8px 0 5px;
}

.browser .card-head {
    height: 18px;
    padding-right: 6px;
}

.browser .card-head h4 {
    padding-left: 6px;
    font-size: 5px;
    line-height: 12px;
}

.currency-card .card-head .btn-solid {
    width: 36px;
    height: 12px;
}

.bulk {
    display: flex;
    align-items: center;
    gap: 3px;
    padding: 8px 12px 12px 7px;
}

.bulk select {
    width: 52px;
    height: 12px;
}

.shot .bulk .btn-solid {
    width: 30px;
    height: 13px;
    padding-left: 6px;
}

.find {
    display: flex;
    align-items: center;
    gap: 4px;
    width: 69px;
    height: 12px;
    margin-left: auto;
    padding-left: 3px;
    border-radius: 6px;
    background: #f3f5f7;
}

.find svg {
    width: 6px;
    height: 6px;
}

.shot .find input {
    width: 50px;
    padding: 0;
    border: 0;
    background: none;
}

.currency-card table {
    width: 488px;
    margin-left: 7px;
}

.currency-card thead tr {
    height: 23px;
}

.currency-card tbody tr {
    height: 19px;
}

.currency-card td {
    border: 1px solid #f1f3f5;
}

.shot .currency-card th {
    position: relative;
    padding: 0 8px 0 3px;
}

.currency-card th svg {
    position: absolute;
    right: 2px;
    top: 9px;
    width: 4px;
    height: 5px;
    color: #9a9fa8;
}

.shot input[type="checkbox"] {
    display: block;
    width: 6px;
    height: 6px;
    padding: 0;
    border-color: #dfe2e5;
}

.shot .currency-card .acts {
    padding: 0 4px;
    white-space: normal;
    text-align: center;
    font-size: 0;
    line-height: 0;
}

.currency-card .acts svg {
    width: 6px;
    height: 6px;
    margin: 0 1px 1px;
}

.browser .scroll {
    top: 1px;
    height: 245px;
}

.browser .cursor {
    left: 435px;
    top: 76px;
}

/* Currency limits form */
.limits {
    flex: 1;
    margin: 0 7px 0 4px;
    padding: 2px 244px 0 7px;
    background: #fff;
}

.limits label,
.limits h5 {
    display: block;
    font-size: 4px;
    line-height: 12px;
}

.limits h5 {
    padding-top: 8px;
    font-weight: 600;
}

.limits input,
.limits select {
    display: block;
    width: 100%;
    height: 12px;
}

.shot .limits input {
    padding: 0 5px;
}

.shot .limits input:disabled {
    background: #e9edf0;
}

.form-buttons {
    display: flex;
    gap: 1px;
    padding-top: 11px;
}

.form-buttons .btn-solid {
    width: 39px;
    height: 12px;
}

.form-buttons .btn-solid + .btn-solid {
    width: 32px;
}

.dark .scroll {
    top: 52px;
    width: 2px;
    height: 181px;
}

.shot .to-top {
    position: absolute;
    right: 3px;
    bottom: 12px;
    width: 9px;
    height: 9px;
    padding: 0;
    border: 0;
    background: none;
}

.dark .cursor {
    left: 466px;
    top: 200px;
}
```
